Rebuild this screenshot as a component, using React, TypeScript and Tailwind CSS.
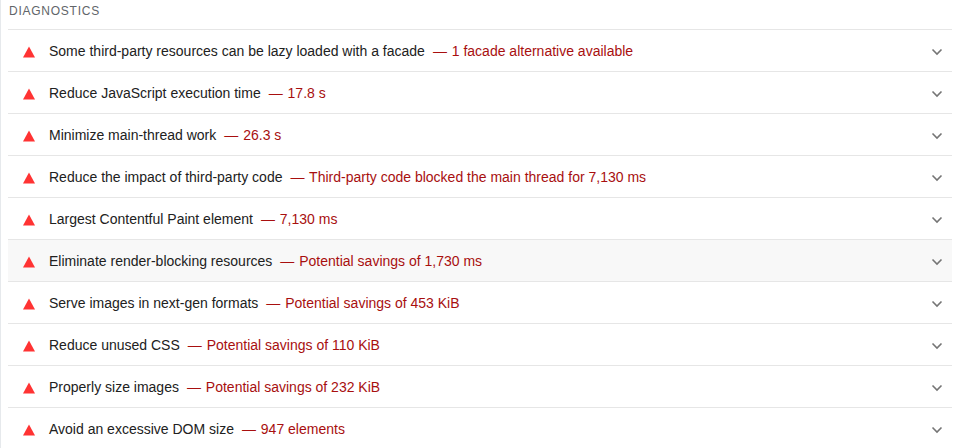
const rows: [string, string][] = [
  ["Some third-party resources can be lazy loaded with a facade", "1 facade alternative available"],
  ["Reduce JavaScript execution time", "17.8 s"],
  ["Minimize main-thread work", "26.3 s"],
  ["Reduce the impact of third-party code", "Third-party code blocked the main thread for 7,130 ms"],
  ["Largest Contentful Paint element", "7,130 ms"],
  ["Eliminate render-blocking resources", "Potential savings of 1,730 ms"],
  ["Serve images in next-gen formats", "Potential savings of 453 KiB"],
  ["Reduce unused CSS", "Potential savings of 110 KiB"],
  ["Properly size images", "Potential savings of 232 KiB"],
  ["Avoid an excessive DOM size", "947 elements"],
];

export default function App() {
  return (
    <div className="h-[448px] w-[959px] overflow-hidden border-l border-[#e6e9ec] bg-white pl-[7px] pr-[7px] font-['Liberation_Sans',Arial,sans-serif]">
      <div className="flex h-[29px] items-start pl-[1px] pt-[3px] text-[12px] leading-[16px] tracking-[0.75px] text-[#616569]">DIAGNOSTICS</div>
      {rows.map(([title, value], i) => (
        <div key={title} className={`flex h-[42px] items-center border-t border-[#e6e6e6] pl-[15px] pr-[9px] pt-[2px] text-[14px] ${i === 5 ? "bg-[#f8f8f8]" : ""}`}>
          <svg width="12" height="12" viewBox="0 0 12 12" className="mr-[14px] shrink-0">
            <polygon points="6,0.5 12,11.5 0,11.5" fill="#f33" />
          </svg>
          <span className="text-[#212121]">{title}</span>
          <span className="ml-[8px] text-[#a80f0f]"><span className="mr-[1px]">—</span> {value}</span>
          <svg width="12" height="8" viewBox="0 0 12 8" className="ml-auto shrink-0" fill="none" stroke="#757575" strokeWidth="1.6">
            <path d="M1.5 1.5 L6 6 L10.5 1.5" />
          </svg>
        </div>
      ))}
    </div>
  );
}
